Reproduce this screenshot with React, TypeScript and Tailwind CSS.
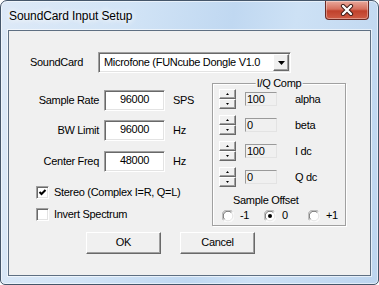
const raised =
  'border border-t-white border-l-white border-b-[#696969] border-r-[#696969] shadow-[inset_-1px_-1px_0_#a0a0a0] bg-[#f0f0f0]'
const sunken =
  'border border-t-[#a0a0a0] border-l-[#a0a0a0] border-b-white border-r-white shadow-[inset_1px_1px_0_#696969,inset_-1px_-1px_0_#e3e3e3]'

function Edit({ value }: { value: string }) {
  return (
    <div className={`w-[61px] h-[21px] bg-white flex items-center justify-center pb-[2px] ${sunken}`}>
      {value}
    </div>
  )
}

function FieldRow({ label, value, unit, top }: { label: string; value: string; unit: string; top: string }) {
  return (
    <div className={`flex items-center ${top}`}>
      <span className="w-[90px] text-right">{label}</span>
      <div className="ml-[5px]">
        <Edit value={value} />
      </div>
      <span className="ml-[8px]">{unit}</span>
    </div>
  )
}

function CheckBox({ label, checked, top }: { label: string; checked?: boolean; top: string }) {
  return (
    <div className={`flex items-center pl-[27px] ${top}`}>
      <div className={`w-[13px] h-[13px] bg-white flex items-center justify-center ${sunken}`}>
        {checked && (
          <svg width={9} height={9} viewBox="0 0 9 9">
            <path d="M1.5 4 L3.5 6 L7.5 2" fill="none" stroke="#000" strokeWidth={2} />
          </svg>
        )}
      </div>
      <span className="ml-[5px]">{label}</span>
    </div>
  )
}

function SpinBtn({ up }: { up?: boolean }) {
  return (
    <div className={`w-[17px] h-[10px] flex items-center justify-center ${raised}`}>
      <svg width={3} height={2} viewBox="0 0 3 2">
        {up ? <polygon points="1.5,0 3,2 0,2" fill="#000" /> : <polygon points="0,0 3,0 1.5,2" fill="#000" />}
      </svg>
    </div>
  )
}

function SpinRow({ value, label, top }: { value: string; label: string; top: string }) {
  return (
    <div className={`flex items-center pl-[6px] ${top}`}>
      <div className="flex flex-col">
        <SpinBtn up />
        <SpinBtn />
      </div>
      <div className="ml-[9px] w-[32px] h-[14px] border border-t-[#9a9a9a] border-l-[#9a9a9a] border-b-[#e3e3e3] border-r-[#e3e3e3] flex items-center pl-[1px] leading-[12px]">
        {value}
      </div>
      <span className="ml-[18px]">{label}</span>
    </div>
  )
}

function Radio({ label, checked, width }: { label: string; checked?: boolean; width: string }) {
  return (
    <div className={`flex items-center ${width}`}>
      <svg width={12} height={12} viewBox="0 0 12 12">
        <circle cx={6} cy={6} r={5.5} fill="#fff" />
        <path d="M1.6 10.4 A5.5 5.5 0 0 1 10.4 1.6" fill="none" stroke="#a0a0a0" strokeWidth={1} />
        <path d="M2.6 9.4 A4.5 4.5 0 0 1 9.4 2.6" fill="none" stroke="#696969" strokeWidth={1} />
        <path d="M10.4 1.6 A5.5 5.5 0 0 1 1.6 10.4" fill="none" stroke="#ffffff" strokeWidth={1} />
        <path d="M9.4 2.6 A4.5 4.5 0 0 1 2.6 9.4" fill="none" stroke="#e3e3e3" strokeWidth={1} />
        {checked && <circle cx={6} cy={6} r={2} fill="#000" />}
      </svg>
      <span className="ml-[6px]">{label}</span>
    </div>
  )
}

export default function App() {
  return (
    <div className="w-[379px] h-[285px] bg-white font-['Liberation_Sans',Arial,sans-serif] text-[11px] leading-[13px] tracking-[-0.3px] text-black">
      <div className="w-full h-full flex flex-col rounded-t-[7px] rounded-b-[5px] border border-[#45566a] bg-[linear-gradient(100deg,#dde9f7_0%,#d2e4f6_30%,#c0d8f1_55%,#cde1f5_70%,#bdd5ef_100%)] shadow-[inset_0_0_0_1px_rgba(255,255,255,0.55)]">
        {/* Title bar */}
        <div className="h-[29px] flex items-center shrink-0">
          <span className="pl-[8px] text-[12px] leading-[16px] tracking-[-0.1px] [text-shadow:0_0_6px_#fff,0_0_6px_#fff]">
            SoundCard Input Setup
          </span>
          <div className="ml-auto mr-[9px] self-start w-[44px] h-[19px] rounded-b-[4px] border border-t-0 border-[#6b2a24] bg-[linear-gradient(180deg,#e9a99c_0%,#d6705e_45%,#c0412c_55%,#cf5c45_100%)] shadow-[inset_0_0_0_1px_rgba(255,255,255,0.35)] flex items-center justify-center">
            <svg width={14} height={12} viewBox="0 0 14 12">
              <path d="M3 2 L11 10 M11 2 L3 10" stroke="#3b1a16" strokeWidth={4.2} strokeLinecap="round" />
              <path d="M3 2 L11 10 M11 2 L3 10" stroke="#fff" strokeWidth={2.4} strokeLinecap="round" />
            </svg>
          </div>
        </div>

        {/* Client area */}
        <div className="mx-[7px] h-[246px] shrink-0 border border-[#5e6f82] bg-[#f0f0f0] shadow-[0_0_0_1px_rgba(255,255,255,0.6)] flex flex-col">
          {/* SoundCard combo row */}
          <div className="flex items-center mt-[21px] pl-[21px]">
            <span className="w-[68px]">SoundCard</span>
            <div className={`w-[193px] h-[21px] bg-white flex items-center ${sunken}`}>
              <span className="flex-1 pl-[5px] pb-[1px] whitespace-nowrap overflow-hidden">Microfone (FUNcube Dongle V1.0</span>
              <div className={`w-[16px] h-[17px] mr-[1px] flex items-center justify-center ${raised}`}>
                <svg width={7} height={4} viewBox="0 0 7 4">
                  <polygon points="0,0 7,0 3.5,4" fill="#000" />
                </svg>
              </div>
            </div>
          </div>

          {/* Main row */}
          <div className="flex mt-[10px]">
            <div className="w-[203px] flex flex-col">
              <FieldRow label="Sample Rate" value="96000" unit="SPS" top="mt-[7px]" />
              <FieldRow label="BW Limit" value="96000" unit="Hz" top="mt-[9px]" />
              <FieldRow label="Center Freq" value="48000" unit="Hz" top="mt-[10px]" />
              <CheckBox label="Stereo (Complex I=R, Q=L)" checked top="mt-[14px]" />
              <CheckBox label="Invert Spectrum" top="mt-[9px]" />
            </div>

            {/* I/Q Comp group */}
            <div className="relative w-[134px] h-[143px] border border-[#a0a0a0] shadow-[inset_1px_1px_0_#fff,1px_1px_0_#fff] flex flex-col">
              <span className="absolute -top-[7px] left-1/2 -translate-x-1/2 px-[1px] bg-[#f0f0f0] whitespace-nowrap">
                I/Q Comp
              </span>
              <SpinRow value="100" label="alpha" top="mt-[5px]" />
              <SpinRow value="0" label="beta" top="mt-[6px]" />
              <SpinRow value="100" label="I dc" top="mt-[6px]" />
              <SpinRow value="0" label="Q dc" top="mt-[6px]" />
              <span className="mt-[7px] ml-[20px]">Sample Offset</span>
              <div className="flex items-center mt-[2px] pl-[9px]">
                <Radio label="-1" width="w-[42px]" />
                <Radio label="0" checked width="w-[44px]" />
                <Radio label="+1" width="w-[30px]" />
              </div>
            </div>
          </div>

          {/* Buttons */}
          <div className="flex mt-[6px] pl-[77px]">
            <div className={`w-[75px] h-[22px] flex items-center justify-center pb-[1px] ${raised}`}>OK</div>
            <div className={`ml-[19px] w-[75px] h-[22px] flex items-center justify-center pb-[1px] ${raised}`}>Cancel</div>
          </div>
        </div>
      </div>
    </div>
  )
}
